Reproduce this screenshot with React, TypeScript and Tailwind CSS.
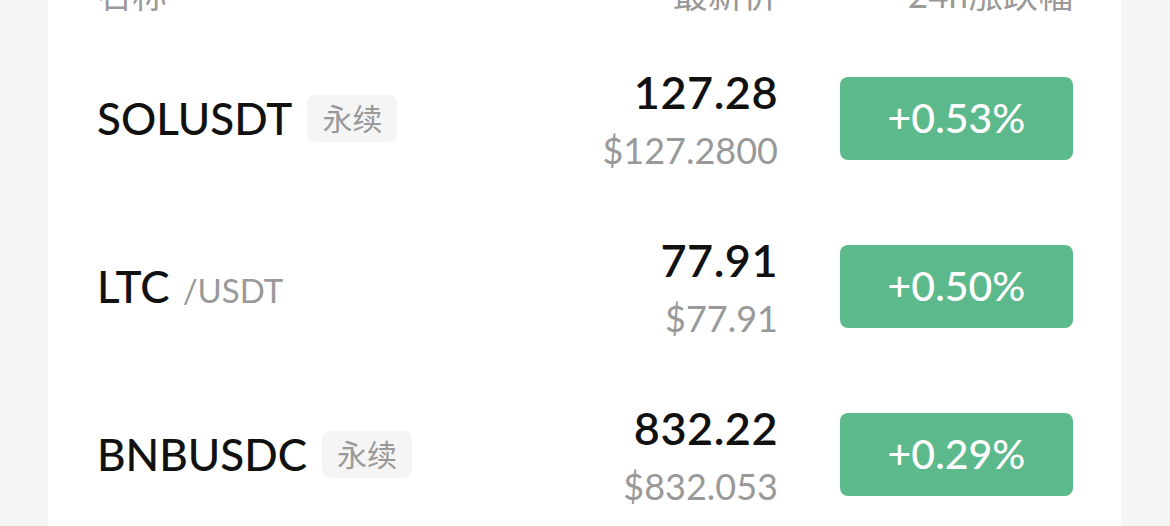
import React from 'react';

type Row = {
  base: string;
  quote?: string;
  tag?: string;
  price: string;
  usd: string;
  change: string;
};

const rows: Row[] = [
  { base: 'SOLUSDT', tag: '永续', price: '127.28', usd: '$127.2800', change: '+0.53%' },
  { base: 'LTC', quote: '/USDT', price: '77.91', usd: '$77.91', change: '+0.50%' },
  { base: 'BNBUSDC', tag: '永续', price: '832.22', usd: '$832.053', change: '+0.29%' },
];

const MarketRow = ({ row }: { row: Row }) => (
  <div className="flex h-[168px] items-center">
    <div className="flex flex-1 items-center gap-[15px]">
      {row.quote ? (
        <div className="flex items-baseline gap-[13px]">
          <span className="text-[44px] font-medium leading-none text-[#111]">{row.base}</span>
          <span className="text-[33px] leading-none text-[#999]">{row.quote}</span>
        </div>
      ) : (
        <span className="text-[44px] font-medium leading-none text-[#111]">{row.base}</span>
      )}
      {row.tag && (
        <span className="flex h-[47px] items-center rounded-[8px] bg-[#f5f5f5] px-[15px] text-[30px] leading-none text-[#999]">
          {row.tag}
        </span>
      )}
    </div>
    <div className="mt-[4px] flex flex-col items-end gap-[12px]">
      <span className="text-[45px] font-semibold leading-[48px] tracking-[0.5px] text-[#111]">{row.price}</span>
      <span className="text-[36px] leading-[44px] text-[#999]">{row.usd}</span>
    </div>
    <div className="ml-[62px] flex h-[83px] w-[233px] items-center justify-center rounded-[8px] bg-[#5cb98b] text-[41px] font-medium text-white">
      {row.change}
    </div>
  </div>
);

export default function App() {
  return (
    <div
      className="h-[526px] w-full overflow-hidden bg-[#f5f5f5] pl-[48px] pr-[49px]"
      style={{ fontFamily: "Lato, 'Noto Sans CJK SC', sans-serif" }}
    >
      <div className="-mt-[26px] bg-white pl-[49px] pr-[48px]">
        <div className="flex h-[60px] items-start text-[35px] leading-[40px] text-[#999]">
          <span className="flex-1">名称</span>
          <span>最新价</span>
          <span className="ml-[130px]">24h涨跌幅</span>
        </div>
        {rows.map((r) => (
          <MarketRow key={r.base} row={r} />
        ))}
      </div>
    </div>
  );
}
